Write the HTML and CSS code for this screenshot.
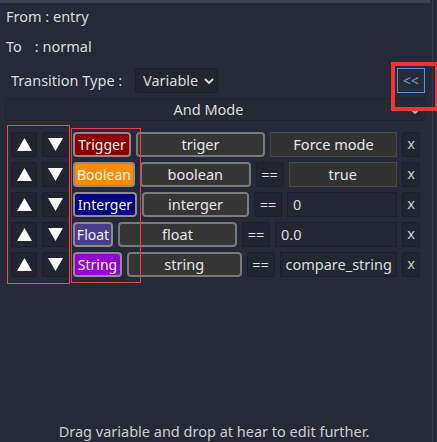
FILE: index.html
```html
<!DOCTYPE html>
<html>
<head>
<meta charset="utf-8">
<link rel="stylesheet" href="styles.css">
</head>
<body>
<div class="app">
  <div class="panel">
    <div class="topbar"></div>
    <div class="label first">From : entry</div>
    <div class="label second">To<span class="tgap"></span>: normal</div>
    <div class="typerow">
      <span class="typelabel">Transition Type :</span>
      <div class="dropdown">
        <span>Variable</span>
        <svg class="chev" width="10" height="6" viewBox="0 0 10 6"><polyline points="1,1 5,5 9,1" fill="none" stroke="#e0e0e0" stroke-width="1.8"/></svg>
      </div>
      <div class="spacer"></div>
      <div class="collapse-wrap">
        <div class="collapse">&lt;&lt;</div>
      </div>
    </div>
    <div class="modebar">
      <span class="modetext">And Mode</span>
      <svg class="modechev" width="10" height="6" viewBox="0 0 10 6"><polyline points="1,1 5,5 9,1" fill="none" stroke="#b4b4b4" stroke-width="1.8"/></svg>
    </div>
    <div class="rows">
      <div class="mark mark-left"></div>
      <div class="mark mark-types"></div>

      <div class="row">
        <div class="btn arrow"><svg width="15" height="13" viewBox="0 0 15 13"><polygon points="7.5,0 15,13 0,13" fill="#fff"/></svg></div>
        <div class="btn arrow"><svg width="15" height="13" viewBox="0 0 15 13"><polygon points="0,0 15,0 7.5,13" fill="#fff"/></svg></div>
        <div class="badge trigger">Trigger</div>
        <div class="name">triger</div>
        <div class="value solid">Force mode</div>
        <div class="btn del">x</div>
      </div>

      <div class="row">
        <div class="btn arrow"><svg width="15" height="13" viewBox="0 0 15 13"><polygon points="7.5,0 15,13 0,13" fill="#fff"/></svg></div>
        <div class="btn arrow"><svg width="15" height="13" viewBox="0 0 15 13"><polygon points="0,0 15,0 7.5,13" fill="#fff"/></svg></div>
        <div class="badge boolean">Boolean</div>
        <div class="name">boolean</div>
        <div class="btn op">==</div>
        <div class="value solid">true</div>
        <div class="btn del">x</div>
      </div>

      <div class="row">
        <div class="btn arrow"><svg width="15" height="13" viewBox="0 0 15 13"><polygon points="7.5,0 15,13 0,13" fill="#fff"/></svg></div>
        <div class="btn arrow"><svg width="15" height="13" viewBox="0 0 15 13"><polygon points="0,0 15,0 7.5,13" fill="#fff"/></svg></div>
        <div class="badge interger">Interger</div>
        <div class="name">interger</div>
        <div class="btn op">==</div>
        <div class="value edit">0</div>
        <div class="btn del">x</div>
      </div>

      <div class="row">
        <div class="btn arrow"><svg width="15" height="13" viewBox="0 0 15 13"><polygon points="7.5,0 15,13 0,13" fill="#fff"/></svg></div>
        <div class="btn arrow"><svg width="15" height="13" viewBox="0 0 15 13"><polygon points="0,0 15,0 7.5,13" fill="#fff"/></svg></div>
        <div class="badge float">Float</div>
        <div class="name">float</div>
        <div class="btn op">==</div>
        <div class="value edit">0.0</div>
        <div class="btn del">x</div>
      </div>

      <div class="row">
        <div class="btn arrow"><svg width="15" height="13" viewBox="0 0 15 13"><polygon points="7.5,0 15,13 0,13" fill="#fff"/></svg></div>
        <div class="btn arrow"><svg width="15" height="13" viewBox="0 0 15 13"><polygon points="0,0 15,0 7.5,13" fill="#fff"/></svg></div>
        <div class="badge string">String</div>
        <div class="name">string</div>
        <div class="btn op">==</div>
        <div class="value edit">compare_string</div>
        <div class="btn del">x</div>
      </div>
    </div>
    <div class="hint">Drag variable and drop at hear to edit further.</div>
  </div>
  <div class="vline"></div>
  <div class="rest"></div>
</div>
</body>
</html>
```

FILE: styles.css
```css
* { box-sizing: border-box; }
html, body {
  margin: 0;
  padding: 0;
  width: 437px;
  height: 442px;
  overflow: hidden;
  background: #262a38;
}
body {
  font-family: "Noto Sans", "DejaVu Sans", sans-serif;
  font-size: 14.5px;
  line-height: 19px;
  color: #dcdcdc;
}
.app {
  display: flex;
  height: 442px;
}
.panel {
  width: 432px;
  height: 442px;
  display: flex;
  flex-direction: column;
  position: relative;
}
.topbar {
  height: 3px;
  width: 430px;
  background: #3b4050;
}
.vline {
  width: 1px;
  background: #363b4a;
}
.rest {
  flex: 1;
  background: #252937;
}
.label {
  padding-left: 6px;
  height: 19px;
}
.label.first { margin-top: 4px; }
.label.second { margin-top: 11px; }
.tgap {
  display: inline-block;
  width: 13px;
}
.typerow {
  margin-top: 12px;
  height: 25px;
  display: flex;
  align-items: center;
  padding-left: 11px;
}
.typelabel {
  width: 124px;
}
.dropdown {
  width: 83px;
  height: 25px;
  background: #212530;
  border: 1px solid #1c1f29;
  border-radius: 2px;
  display: flex;
  align-items: center;
  padding-left: 7px;
  gap: 6px;
}
.chev { margin-top: 1px; }
.spacer { flex: 1; }
.collapse-wrap {
  position: relative;
  width: 28px;
  height: 25px;
  margin-right: 7px;
  flex: none;
}
.collapse {
  width: 28px;
  height: 25px;
  border: 1px solid #5b8fd6;
  color: #6e9de0;
  display: flex;
  align-items: center;
  justify-content: center;
  font-size: 14px;
  padding-bottom: 1px;
}
.collapse-wrap::after {
  content: "";
  position: absolute;
  z-index: 5;
  left: -6px;
  top: -6px;
  width: 40px;
  height: 41px;
  border: 4px solid #ee3434;
}
.modebar {
  margin-top: 5px;
  margin-left: 5px;
  width: 421px;
  height: 23px;
  border: 1px solid #1f232e;
  background: #252936;
  display: flex;
  align-items: center;
  position: relative;
  padding-right: 14px;
}
.modetext {
  flex: 1;
  text-align: center;
}
.modechev {
  position: absolute;
  right: 5px;
  top: 9px;
}
.rows {
  position: relative;
  margin-top: 11px;
  padding-left: 11px;
  display: flex;
  flex-direction: column;
  gap: 5px;
  width: 420px;
}
.mark {
  position: absolute;
  z-index: 5;
  pointer-events: none;
}
.mark-left {
  left: 7px;
  top: -7px;
  width: 63px;
  height: 159px;
  border: 1px solid #d95454;
}
.mark-types {
  left: 71px;
  top: -4px;
  width: 70px;
  height: 155px;
  border: 1px solid #e54444;
}
.row {
  display: flex;
  height: 25px;
  gap: 5px;
}
.btn {
  background: #212530;
  border: 1px solid #1c1f29;
  border-radius: 2px;
  display: flex;
  align-items: center;
  justify-content: center;
  flex: none;
}
.arrow { width: 26px; }
.arrow svg { display: block; }
.badge {
  flex: none;
  border: 2px solid #8c8c8c;
  border-radius: 4px;
  color: #f2f2f2;
  display: flex;
  align-items: center;
  justify-content: center;
  white-space: nowrap;
  font-size: 14px;
}
.trigger { background: #8b0000; width: 58px; }
.boolean { background: #ff8c00; width: 62px; }
.interger { background: #000080; width: 64px; }
.float { background: #483d8b; width: 40px; }
.string { background: #9400d3; width: 49px; }
.name {
  flex: 1 1 0;
  min-width: 0;
  background: #353535;
  border: 2px solid #7a7a7a;
  border-radius: 4px;
  display: flex;
  align-items: center;
  justify-content: center;
  color: #e6e6e6;
}
.op { width: 28px; color: #e0e0e0; }
.value {
  flex: 1 1 0;
  min-width: 0;
  display: flex;
  align-items: center;
  white-space: nowrap;
  overflow: hidden;
}
.value.solid {
  background: #323232;
  border: 1px solid #474747;
  justify-content: center;
  color: #e6e6e6;
}
.value.edit {
  background: #232733;
  border: 1px solid #1c1f29;
  padding-left: 5px;
  color: #dcdcdc;
}
.del { width: 18px; color: #cfcfcf; padding-bottom: 2px; }
.hint {
  margin-top: auto;
  margin-bottom: 1px;
  text-align: center;
  color: #cdcdcd;
  padding-right: 4px;
}
```
